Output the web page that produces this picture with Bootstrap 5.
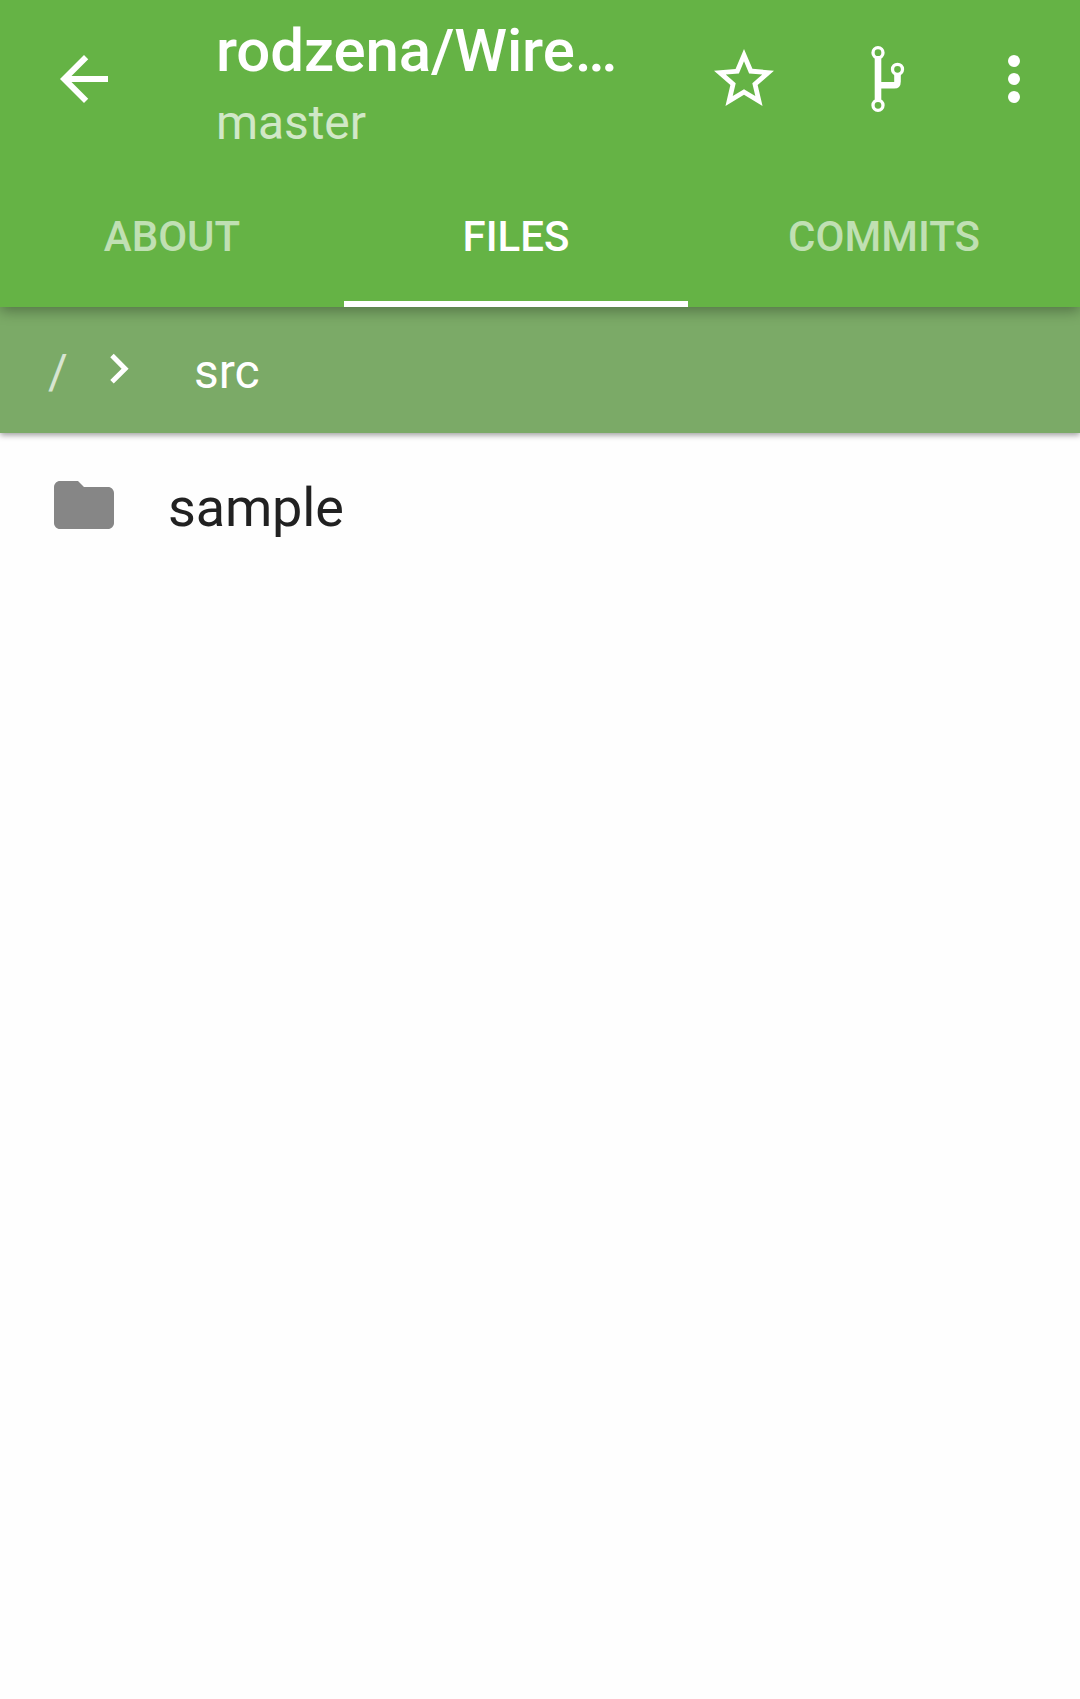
<!DOCTYPE html>
<html lang="en">
<head>
<meta charset="utf-8">
<meta name="viewport" content="width=device-width, initial-scale=1">
<title>rodzena/Wire…</title>
<link href="https://cdn.jsdelivr.net/npm/bootstrap@5.3.0/dist/css/bootstrap.min.css" rel="stylesheet">
<style>
body { font-family: Roboto, "Liberation Sans", sans-serif; background: #fefefe; color: #212121; }
svg { display: block; flex: none; }
.app-header { background: #65b345; z-index: 2; box-shadow: 0 4px 13px rgba(0,0,0,.32); }
.toolbar { height: 158px; padding: 0 30px 0 48px; }
.icon { width: 72px; height: 72px; }
.repo-title { font-size: 60px; line-height: 72px; font-weight: 500; letter-spacing: -.13px; }
.repo-branch { font-size: 48px; line-height: 72px; opacity: .7; letter-spacing: -.1px; }
.titles { margin-left: 96px; padding-top: 16px; }
.actions { gap: 63px; }
.tabs { height: 149px; }
.tabs .nav-link { width: 344px; padding: 14px 0 0; font-size: 42px; line-height: 1; font-weight: 500; color: rgba(255,255,255,.6); border-bottom: 6px solid transparent; border-radius: 0; }
.tabs .nav-link.wide { width: 392px; }
.tabs .nav-link.active { color: #fff; border-bottom-color: #fff; }
.crumbs { height: 126px; background: #7baa67; color: #fff; font-size: 48px; line-height: 1; padding: 4px 0 0 48px; z-index: 1; box-shadow: 0 2px 6px rgba(0,0,0,.4); }
.crumb-root { opacity: .7; width: 18px; }
.crumb-arrow { width: 59.4px; height: 59.4px; margin: 0 45.6px 7px 22.9px; }
.file-row { height: 144px; padding: 0 48px; font-size: 54px; line-height: 1; background: transparent; color: #212121; }
.file-name { margin-left: 48px; padding-top: 5px; letter-spacing: -.17px; }
</style>
</head>
<body>
<header class="app-header position-relative text-white">
  <div class="toolbar d-flex align-items-center">
    <svg class="icon" viewBox="0 0 24 24" fill="currentColor"><path d="M20 11H7.83l5.59-5.59L12 4l-8 8 8 8 1.41-1.41L7.83 13H20v-2z"/></svg>
    <div class="titles flex-grow-1 text-nowrap">
      <div class="repo-title">rodzena/Wire…</div>
      <div class="repo-branch">master</div>
    </div>
    <div class="actions d-flex align-items-center">
      <svg class="icon" viewBox="0 0 24 24" fill="currentColor"><path d="M22 9.24l-7.19-.62L12 2 9.19 8.63 2 9.24l5.46 4.73L5.82 21 12 17.27 18.18 21l-1.63-7.03L22 9.24zM12 15.4l-3.76 2.27 1-4.28-3.32-2.88 4.38-.38L12 6.1l1.71 4.04 4.38.38-3.32 2.88 1 4.28L12 15.4z"/></svg>
      <svg class="icon" viewBox="0 0 72 72" fill="none" stroke="currentColor"><path stroke-width="6.6" d="M35 14.5V57.5M35 42.3H51.2Q54.5 42.3 54.5 38.5V31"/><circle cx="35" cy="9.7" r="5" stroke-width="3.3"/><circle cx="54.5" cy="26.3" r="5" stroke-width="3.3"/><circle cx="35" cy="62.3" r="5" stroke-width="3.3"/></svg>
      <svg class="icon" viewBox="0 0 24 24" fill="currentColor"><circle cx="12" cy="6" r="2"/><circle cx="12" cy="12" r="2"/><circle cx="12" cy="18" r="2"/></svg>
    </div>
  </div>
  <nav class="tabs nav flex-nowrap">
    <a class="nav-link d-flex align-items-center justify-content-center" href="#">ABOUT</a>
    <a class="nav-link active d-flex align-items-center justify-content-center" href="#">FILES</a>
    <a class="nav-link wide d-flex align-items-center justify-content-center" href="#">COMMITS</a>
  </nav>
</header>
<div class="crumbs position-relative d-flex align-items-center">
  <span class="crumb-root">/</span>
  <svg class="crumb-arrow" viewBox="0 0 24 24" fill="currentColor"><path d="M10 6L8.59 7.41 13.17 12l-4.58 4.59L10 18l6-6z"/></svg>
  <span>src</span>
</div>
<main class="list-group list-group-flush">
  <div class="list-group-item file-row d-flex align-items-center">
    <svg class="icon" viewBox="0 0 24 24" fill="#868686"><path d="M10 4H4c-1.1 0-1.99.9-1.99 2L2 18c0 1.1.9 2 2 2h16c1.1 0 2-.9 2-2V8c0-1.1-.9-2-2-2h-8l-2-2z"/></svg>
    <span class="file-name">sample</span>
  </div>
</main>
<script src="https://cdn.jsdelivr.net/npm/bootstrap@5.3.0/dist/js/bootstrap.bundle.min.js"></script>
</body>
</html>
